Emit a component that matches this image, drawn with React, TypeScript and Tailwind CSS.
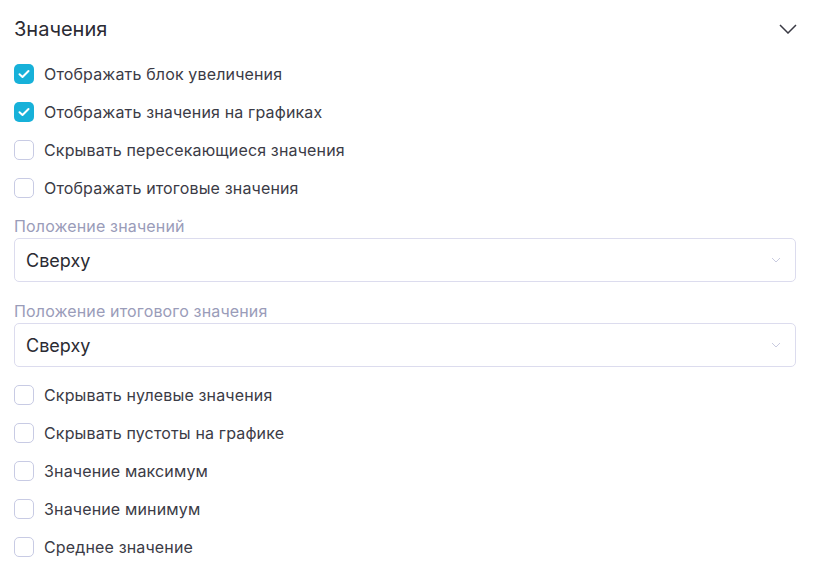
import React from 'react';

const topChecks = [
  { label: 'Отображать блок увеличения', checked: true },
  { label: 'Отображать значения на графиках', checked: true },
  { label: 'Скрывать пересекающиеся значения', checked: false },
  { label: 'Отображать итоговые значения', checked: false },
];

const bottomChecks = [
  { label: 'Скрывать нулевые значения', checked: false },
  { label: 'Скрывать пустоты на графике', checked: false },
  { label: 'Значение максимум', checked: false },
  { label: 'Значение минимум', checked: false },
  { label: 'Среднее значение', checked: false },
];

const CheckRow = ({ label, checked }: { label: string; checked: boolean }) => (
  <label className="flex h-[38px] items-center gap-[10px]">
    {checked ? (
      <span className="flex h-[20px] w-[20px] items-center justify-center rounded-[5px] bg-[#17b1d9]">
        <svg width="12" height="10" viewBox="0 0 12 10" fill="none">
          <path d="M1.5 5.2L4.5 8L10.5 2" stroke="white" strokeWidth="2" strokeLinecap="round" strokeLinejoin="round" />
        </svg>
      </span>
    ) : (
      <span className="h-[20px] w-[20px] rounded-[5px] border border-[#c8cbe4] bg-white" />
    )}
    <span className="text-[16px] tracking-[0.15px] text-[#3b3b46]">{label}</span>
  </label>
);

const Select = ({ label, value, className }: { label: string; value: string; className?: string }) => (
  <div className={className}>
    <div className="h-[20px] text-[16px] leading-[20px] tracking-[0.15px] text-[#9a9cb9]">{label}</div>
    <div className="mt-[2px] flex h-[44px] items-center justify-between rounded-[5px] border border-[#dcdcee] pl-[11px] pr-[14px]">
      <span className="text-[18px] text-[#2b2b33]">{value}</span>
      <svg width="10" height="6" viewBox="0 0 10 6" fill="none">
        <path d="M1 1L5 5L9 1" stroke="#c9cbe0" strokeWidth="1" />
      </svg>
    </div>
  </div>
);

const App = () => {
  return (
    <div className="h-[586px] w-[814px] bg-white pl-[14px] pr-[18px] pt-[16px] font-['Inter',sans-serif]">
      <div className="flex h-[26px] items-center justify-between">
        <h1 className="text-[20px] text-[#2b2b33]">Значения</h1>
        <svg width="18" height="10" viewBox="0 0 18 10" fill="none" className="mr-[-1px]">
          <path d="M1 1L9 9L17 1" stroke="#3a3a44" strokeWidth="1.5" />
        </svg>
      </div>
      <div className="mt-[13px]">
        {topChecks.map((c) => (
          <CheckRow key={c.label} {...c} />
        ))}
      </div>
      <Select className="mt-[9px]" label="Положение значений" value="Сверху" />
      <Select className="mt-[19px]" label="Положение итогового значения" value="Сверху" />
      <div className="mt-[9px]">
        {bottomChecks.map((c) => (
          <CheckRow key={c.label} {...c} />
        ))}
      </div>
    </div>
  );
};

export default App;
